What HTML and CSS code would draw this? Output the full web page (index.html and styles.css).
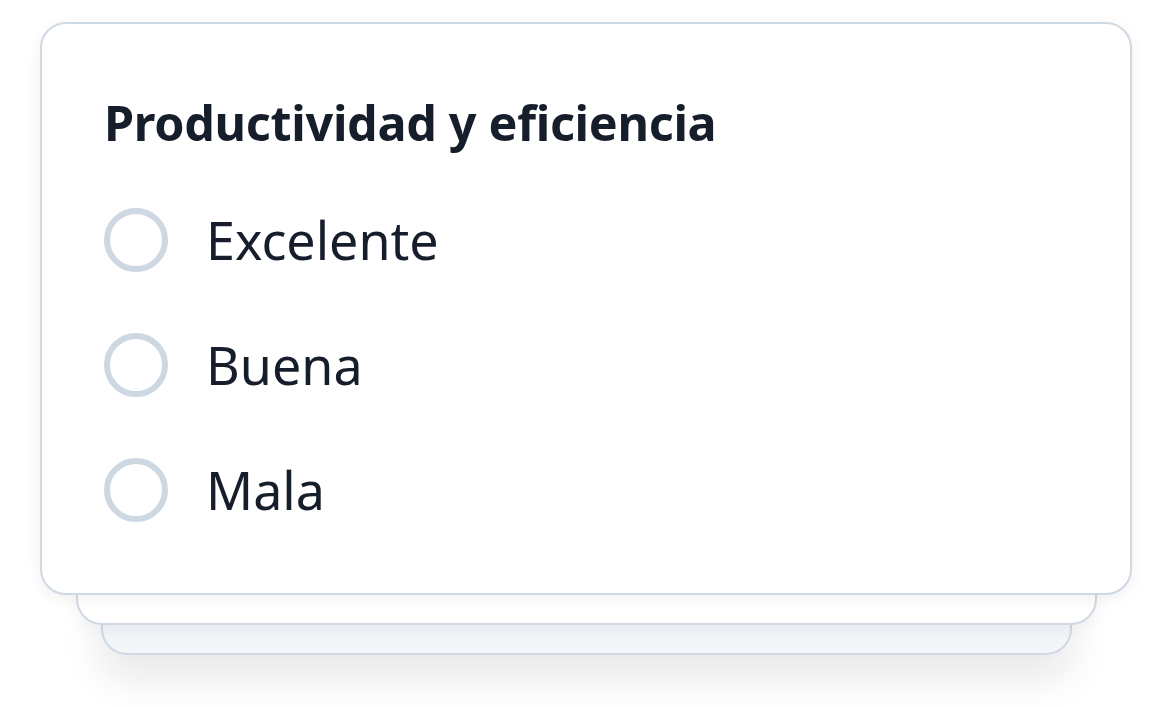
FILE: index.html
```html
<!DOCTYPE html>
<html lang="es">
<head>
  <meta charset="UTF-8" />
  <meta name="viewport" content="width=device-width, initial-scale=1.0" />
  <title>Productividad y eficiencia</title>
  <link rel="stylesheet" href="styles.css">
</head>
<body>

  <div class="stack">
    <div class="card">
      <h2 class="question">Productividad y eficiencia</h2>

      <div class="options">
        <label class="option">
          <input type="radio" name="productividad" value="excelente" />
          <span class="radio"></span>
          <span class="option-text">Excelente</span>
        </label>
        <label class="option">
          <input type="radio" name="productividad" value="buena" />
          <span class="radio"></span>
          <span class="option-text">Buena</span>
        </label>
        <label class="option">
          <input type="radio" name="productividad" value="mala" />
          <span class="radio"></span>
          <span class="option-text">Mala</span>
        </label>
      </div>
    </div>
    <div class="layer layer-2"></div>
    <div class="layer layer-3"></div>
  </div>

</body>
</html>
```

FILE: styles.css
```css
html, body {
  margin: 0;
  min-height: 707px;
  background: #fff;
}
body {
  font-family: "Noto Sans", "Open Sans", Arial, sans-serif;
  color: #161d2b;
  padding-bottom: 52px;
  box-sizing: border-box;
}
.stack {
  display: flex;
  flex-direction: column;
  align-items: center;
  width: 1092px;
  margin: 0 0 0 40px;
  padding-top: 22px;
}
.card {
  position: relative;
  z-index: 3;
  box-sizing: border-box;
  width: 1092px;
  height: 573px;
  padding: 66px 62px 0;
  background: #fff;
  border: 2px solid #cfd9e4;
  border-radius: 26px;
  box-shadow: 0 4px 16px rgba(15, 23, 42, 0.06);
}
.question {
  margin: 0;
  font-size: 48.5px;
  line-height: 64px;
  font-weight: 700;
  letter-spacing: -0.3px;
}
.options {
  display: flex;
  flex-direction: column;
  gap: 61px;
  margin-top: 54px;
}
.option {
  display: flex;
  align-items: center;
  gap: 38px;
  height: 64px;
  cursor: pointer;
}
.option input {
  display: none;
}
.radio {
  box-sizing: border-box;
  width: 64px;
  height: 64px;
  border: 6px solid #cdd8e3;
  border-radius: 50%;
  flex-shrink: 0;
}
.option-text {
  font-size: 52px;
  line-height: 64px;
}
.layer {
  position: relative;
  box-sizing: border-box;
  height: 60px;
  margin-top: -30px;
  border: 2px solid #cfd9e4;
  border-top: none;
  border-radius: 0 0 26px 26px;
}
.layer-2 {
  z-index: 2;
  width: 1021px;
  background: #fff;
  box-shadow: 0 6px 16px rgba(15, 23, 42, 0.05);
}
.layer-3 {
  z-index: 1;
  width: 971px;
  background: #f3f6f9;
  box-shadow: 0 22px 40px rgba(15, 23, 42, 0.1);
}
```
